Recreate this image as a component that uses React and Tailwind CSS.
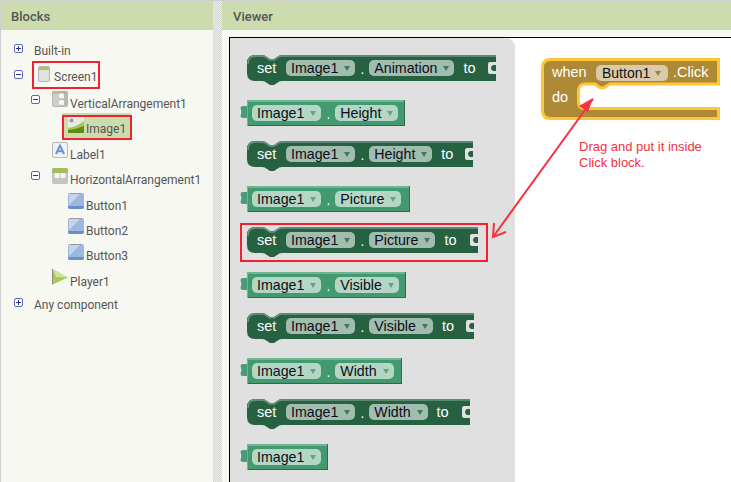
const tree = [
  { label: "Built-in", toggle: "plus", level: 0 },
  { label: "Screen1", toggle: "minus", level: 0, icon: "screen" },
  { label: "VerticalArrangement1", toggle: "minus", level: 1, icon: "vertical" },
  { label: "Image1", level: 2, icon: "image", active: true },
  { label: "Label1", level: 1, icon: "label" },
  { label: "HorizontalArrangement1", toggle: "minus", level: 1, icon: "horizontal" },
  { label: "Button1", level: 2, icon: "button" },
  { label: "Button2", level: 2, icon: "button" },
  { label: "Button3", level: 2, icon: "button" },
  { label: "Player1", level: 1, icon: "player" },
  { label: "Any component", toggle: "plus", level: 0 }
];

const levelPad = ["pl-[13px]", "pl-[31px]", "pl-[47px]"];

function Toggle({ type, level }) {
  return (
    <svg width="9" height="9" viewBox="0 0 9 9" className={`shrink-0 ${level === 1 ? "-ml-[1px]" : ""}`}>
      <rect x="0.5" y="0.5" width="8" height="8" rx="1.5" fill="#fff" stroke="#5b68b5" />
      <path d={type === "plus" ? "M2 4.5h5M4.5 2v5" : "M2 4.5h5"} stroke="#2a2f9a" strokeWidth="1" />
    </svg>
  );
}

function TreeIcon({ type }) {
  if (type === "screen") {
    return (
      <svg width="12" height="16" viewBox="0 0 12 16" className="shrink-0">
        <rect x="0.5" y="0.5" width="11" height="15" rx="1.5" fill="#e2e2e0" stroke="#b4b4b4" />
        <path d="M1 2q0-1 1-1h8q1 0 1 1v2H1z" fill="#a9c75c" />
      </svg>
    );
  }
  if (type === "vertical") {
    return (
      <svg width="16" height="16" viewBox="0 0 16 16" className="shrink-0">
        <rect width="16" height="16" rx="2" fill="#b8b8b4" />
        <rect x="1" y="1" width="6" height="14" fill="#cfcfca" />
        <path d="M0 2q0-2 2-2h12q2 0 2 2v1H0z" fill="#a9b893" opacity="0.7" />
        <rect x="7" y="2.5" width="5" height="5" rx="1" fill="#f5f5f2" />
        <rect x="7" y="9" width="5" height="5" rx="1" fill="#f5f5f2" />
      </svg>
    );
  }
  if (type === "image") {
    return (
      <svg width="16" height="16" viewBox="0 0 16 16" className="shrink-0">
        <rect width="16" height="16" fill="#e8e8e4" />
        <circle cx="3.5" cy="3.5" r="2" fill="#9a9a9a" />
        <path d="M0 11Q8 10 16 4V16H0z" fill="#a3c760" />
        <path d="M0 13Q9 12 16 9V16H0z" fill="#5f8c10" />
      </svg>
    );
  }
  if (type === "label") {
    return (
      <svg width="16" height="16" viewBox="0 0 16 16" className="shrink-0">
        <rect x="0.5" y="0.5" width="15" height="15" rx="1.5" fill="#f2f2f2" stroke="#b8b8b8" />
        <path d="M4 12L8 3.5L12 12M5.5 9.2h5" fill="none" stroke="#6f8fce" strokeWidth="2" />
      </svg>
    );
  }
  if (type === "horizontal") {
    return (
      <svg width="16" height="16" viewBox="0 0 16 16" className="shrink-0">
        <rect width="16" height="16" rx="2" fill="#c4c4c0" />
        <path d="M0 2q0-2 2-2h12q2 0 2 2v3H0z" fill="#a5bb62" />
        <rect x="2.5" y="5" width="5" height="5" rx="1" fill="#f5f5f2" />
        <rect x="8.5" y="5" width="5" height="5" rx="1" fill="#f5f5f2" />
      </svg>
    );
  }
  if (type === "button") {
    return (
      <svg width="16" height="16" viewBox="0 0 16 16" className="shrink-0">
        <rect width="16" height="16" rx="2" fill="#9db8df" />
        <path d="M1 12L12 1H2q-1 0-1 1z" fill="#c5d5ec" />
        <path d="M0 13h16v1q0 2-2 2H2q-2 0-2-2z" fill="#6b8fc9" />
        <path d="M2 0.5h12" stroke="#9a9a9a" />
      </svg>
    );
  }
  return (
    <svg width="16" height="16" viewBox="0 0 16 16" className="shrink-0">
      <path d="M0.5 0L16 8.5L0.5 15.5z" fill="#a7c957" />
      <path d="M0.5 0L16 8.5L4 8z" fill="#cfe39a" />
      <path d="M0.5 0V15.5" stroke="#8d8d7d" />
    </svg>
  );
}

function TreeRow({ item }) {
  return (
    <div className={`flex h-[25.4px] items-center ${levelPad[item.level]}`}>
      <div className="flex w-[20px] shrink-0 items-center">{item.toggle && <Toggle type={item.toggle} level={item.level} />}</div>
      <div className={`flex items-center gap-[2px] ${item.active ? "-ml-[6px] mt-[3px] h-[27px] bg-[#cddcaf] pl-[6px] pr-[5px]" : "h-[25px]"} ${item.level === 0 && item.icon ? "ml-[4px]" : ""}`}>
        {item.icon && <span className={item.active ? "-mt-[2px]" : ""}><TreeIcon type={item.icon} /></span>}
        <span className={`whitespace-nowrap text-[12px] text-[#555] ${item.level === 0 ? "pt-[5px]" : item.active ? "pt-[5px]" : "pt-[9px]"} ${item.icon === "screen" ? "ml-[2px]" : ""}`}>{item.label}</span>
      </div>
    </div>
  );
}

function SetShape({ w }) {
  const notch = "q3 0 5 2l3 2h4l3-2q2-2 5-2";
  const body = `M8 0H15${notch}H${w}V7H${w - 6}Q${w - 8} 7 ${w - 8} 9V17Q${w - 8} 19 ${w - 6} 19H${w}V26H35q-3 0-5 2l-3 2h-4l-3-2q-2-2-5-2H8Q0 26 0 18V8Q0 0 8 0z`;
  return (
    <svg width={w} height="31" viewBox={`0 0 ${w} 31`} className="absolute left-0 top-0">
      <path d={body} fill="#266141" />
      <path d={`M${w} 10H${w - 3}Q${w - 5} 11 ${w - 5} 13Q${w - 5} 15 ${w - 3} 16H${w}z`} fill="#266141" />
      <path d={`M1 9Q1 1 8 1H15q3 0 5 2l3 2h4l3-2q2-2 5-2H${w}`} fill="none" stroke="#6c9682" strokeWidth="1.6" />
    </svg>
  );
}

function GetShape({ w }) {
  return (
    <svg width={w + 7} height="26" viewBox={`0 0 ${w + 7} 26`} className="absolute -left-[7px] top-0">
      <path d="M8 6H3Q0.5 6 0.5 8L1.5 12L0.5 16Q0.5 18 3 18H8z" fill="#4a9b77" />
      <rect x="7" width={w} height="26" fill="#439970" />
      <rect x="7" width={w} height="2" fill="#6db693" />
      <rect x="7" y="25" width={w} height="1" fill="#2c6b4d" />
      <rect x="7" width="1" height="26" fill="#6db693" />
      <rect x={w + 6} width="1" height="26" fill="#2c6b4d" />
    </svg>
  );
}

function Pill({ children, setter }) {
  return (
    <div className={`flex h-[16px] items-center rounded-[5px] pl-[5px] pr-[5px] ${setter ? "bg-[#a1bdaf]" : "bg-[#b3d6c5]"}`}>
      <span className="text-[14.2px] leading-none text-[#0c0c18]">{children}</span>
      <span className={`ml-[6px] h-0 w-0 border-x-[3px] border-t-[5px] border-x-transparent ${setter ? "border-t-[#3f7a5c]" : "border-t-[#5fa585]"}`} />
    </div>
  );
}

function SetBlock({ prop, w }) {
  return (
    <div className="relative mb-[19px] ml-[7px] h-[26px] w-fit">
      <SetShape w={w} />
      <div className="relative flex h-[26px] items-center pl-[10px] whitespace-nowrap">
        <span className="w-[29px] pt-[1px] text-[14.5px] text-white">set</span>
        <Pill setter>Image1</Pill>
        <span className="w-[14px] pt-[3px] text-center text-[14px] text-white">.</span>
        <Pill setter>{prop}</Pill>
        <span className="ml-[9px] pt-[1px] text-[14.5px] text-white">to</span>
      </div>
    </div>
  );
}

function GetBlock({ prop, w }) {
  return (
    <div className="relative mb-[15px] ml-[7px] h-[26px] w-fit">
      <GetShape w={w} />
      <div className="relative flex h-[26px] items-center pl-[5px] whitespace-nowrap">
        <Pill>Image1</Pill>
        {prop && <span className="w-[14px] pt-[3px] text-center text-[14px] text-white">.</span>}
        {prop && <Pill>{prop}</Pill>}
      </div>
    </div>
  );
}

function EventBlock() {
  return (
    <div className="absolute left-[311px] top-[20px] h-[62px] w-[179px]">
      <svg width="179" height="62" viewBox="0 0 179 62" className="absolute left-0 top-0">
        <path
          d="M9.5 1.5H177.5V26H69l-5 3q-3 2-6 0l-4-3H44Q37.5 26 37.5 33V44Q37.5 50.5 44 50.5H177.5V60.5H9.5Q1.5 60.5 1.5 52.5V9.5Q1.5 1.5 9.5 1.5z"
          fill="#ae8a37"
          stroke="#ffc733"
          strokeWidth="3"
        />
      </svg>
      <div className="relative flex h-[27px] items-center pl-[11px] pt-[3px] whitespace-nowrap">
        <span className="w-[44px] text-[14.5px] text-white">when</span>
        <div className="flex h-[16px] w-[72px] items-center rounded-[5px] bg-[#d9cbaa] pl-[6px]">
          <span className="text-[14px] leading-none text-[#111]">Button1</span>
          <span className="ml-[5px] h-0 w-0 border-x-[3px] border-t-[5px] border-x-transparent border-t-[#a08038]" />
        </div>
        <span className="ml-[5px] text-[14.5px] text-white">.Click</span>
      </div>
      <div className="relative flex h-[25px] items-center pl-[11px]">
        <span className="text-[14.5px] text-white">do</span>
      </div>
    </div>
  );
}

export default function App() {
  return (
    <div className="flex h-[482px] w-[731px] overflow-hidden border-t border-l border-[#cfcfcf] bg-[#f7f8f2] font-['Roboto',sans-serif]">
      <aside className="relative flex w-[212px] shrink-0 flex-col">
        <div className="flex h-[29px] shrink-0 items-center bg-[#cddcaf] pl-[10px] pt-[3px] text-[13px] font-medium text-[#555]">Blocks</div>
        <div className="pt-[6px]">
          {tree.map((item) => <TreeRow key={item.label} item={item} />)}
        </div>
        <div className="absolute left-[31px] top-[60px] h-[28px] w-[68px] border-2 border-[#f0222f]" />
        <div className="absolute left-[61px] top-[114px] h-[25px] w-[70px] border-2 border-[#f0222f]" />
      </aside>

      <div className="w-[9px] shrink-0 bg-[#dedede] bg-[repeating-conic-gradient(#ececec_0%_25%,#d6d6d6_0%_50%)] bg-[length:2px_2px]" />

      <section className="flex min-w-0 flex-1 flex-col">
        <div className="flex h-[29px] shrink-0 items-center bg-[#cddcaf] pl-[11px] pt-[3px] text-[13px] font-medium text-[#555]">Viewer</div>
        <div className="min-h-0 flex-1 pl-[7px] pt-[7px]">
          <div className="relative h-full border-l border-t border-black bg-white font-['Liberation_Sans',Arial,sans-serif]">
            <div className="h-full w-[285px] rounded-tr-[9px] bg-[#e0e0e0] pl-[10px] pt-[17px]">
              <SetBlock prop="Animation" w={249} />
              <GetBlock prop="Height" w={158} />
              <SetBlock prop="Height" w={226} />
              <GetBlock prop="Picture" w={163} />
              <SetBlock prop="Picture" w={231} />
              <GetBlock prop="Visible" w={159} />
              <SetBlock prop="Visible" w={227} />
              <GetBlock prop="Width" w={155} />
              <SetBlock prop="Width" w={223} />
              <GetBlock w={81} />
            </div>

            <EventBlock />

            <div className="absolute left-[10px] top-[185px] h-[39px] w-[248px] border-2 border-[#f0222f]" />

            <svg width="140" height="160" viewBox="0 0 140 160" className="absolute left-[255px] top-[55px]">
              <path d="M8 144L108 6" stroke="#f5333f" strokeWidth="2" fill="none" />
              <path d="M108 5L94 13L103 19z" fill="#f5333f" />
              <path d="M9 130L8 144L21 139" stroke="#f5333f" strokeWidth="2" fill="none" />
            </svg>

            <div className="absolute left-[349px] top-[101px] text-[13px] leading-[16px] text-[#f0323f]">
              Drag and put it inside<br />Click block.
            </div>
          </div>
        </div>
      </section>
    </div>
  );
}
